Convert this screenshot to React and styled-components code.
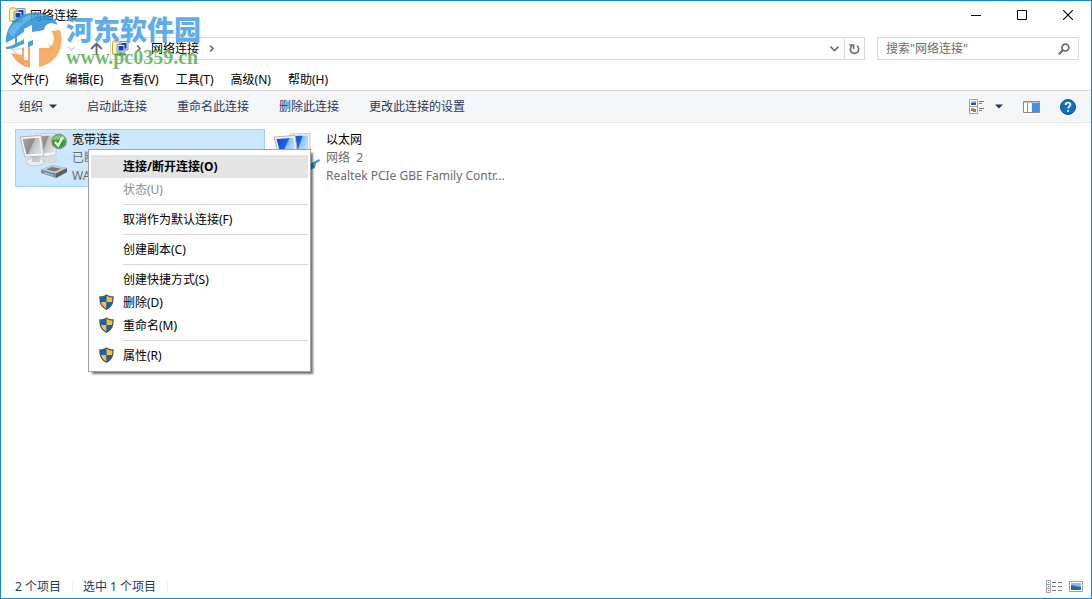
import React from "react";
import styled, { createGlobalStyle, css } from "styled-components";

const Global = createGlobalStyle`
  * { box-sizing: border-box; }
  body {
    margin: 0;
    background: #fff;
    color: #000;
    font-family: "Noto Sans", "Noto Sans CJK SC", sans-serif;
    font-size: 12px;
    line-height: 18px;
  }
  button, input { font: inherit; color: inherit; }
`;

const plainButton = css`
  display: flex;
  align-items: center;
  border: 0;
  padding: 0;
  background: none;
  white-space: nowrap;
`;

const Window = styled.div`
  position: relative;
  display: flex;
  flex-direction: column;
  min-height: 100vh;
  border: 1px solid #1883d7;
  background: #fff;
`;

const TitleBar = styled.header`
  display: flex;
  align-items: center;
  justify-content: space-between;
  height: 28px;
  padding-left: 8px;
`;

const Title = styled.h1`
  display: flex;
  align-items: center;
  gap: 4px;
  margin: 0;
  padding-top: 1px;
  font-size: 12px;
  font-weight: 400;
`;

const WindowControls = styled.div`
  display: flex;
`;

const ControlButton = styled.button`
  ${plainButton}
  justify-content: center;
  width: 46px;
  height: 28px;
`;

const AddressRow = styled.div`
  display: flex;
  align-items: center;
  gap: 12px;
  height: 39px;
  padding: 0 12px 0 10px;
`;

const AddressGroup = styled.div`
  display: flex;
  flex: 1;
  align-items: center;
`;

const NavButtons = styled.div`
  display: flex;
  align-items: center;
  justify-content: space-between;
  width: 92px;
  margin-right: 7px;
`;

const NavButton = styled.button`
  ${plainButton}
`;

const AddressBox = styled.nav`
  display: flex;
  flex: 1;
  align-items: center;
  height: 23px;
  border: 1px solid #d9d9d9;
  padding-left: 1px;
`;

const Crumbs = styled.div`
  display: flex;
  align-items: center;
  gap: 8px;
  padding-left: 5px;
`;

const CrumbButton = styled.button`
  ${plainButton}
`;

const Crumb = styled.a`
  color: #000;
  text-decoration: none;
`;

const BoxEnd = styled.div`
  display: flex;
  margin-left: auto;
`;

const BoxButton = styled.button`
  ${plainButton}
  justify-content: center;
  width: 20px;
  height: 21px;
  border-left: 1px solid ${(p) => (p.$divided ? "#d9d9d9" : "transparent")};
`;

const SearchBox = styled.label`
  display: flex;
  align-items: center;
  width: 202px;
  height: 23px;
  border: 1px solid #d9d9d9;
  padding: 0 8px;
`;

const SearchInput = styled.input`
  flex: 1;
  min-width: 0;
  border: 0;
  padding: 0;
  outline: 0;
  background: none;
  &::placeholder { color: #6d6d6d; opacity: 1; }
`;

const MenuBar = styled.nav`
  display: flex;
  align-items: center;
  gap: 17px;
  height: 22px;
  padding: 2px 10px 0;
`;

const MenuBarButton = styled.button`
  ${plainButton}
`;

const Toolbar = styled.div`
  display: flex;
  align-items: center;
  justify-content: space-between;
  height: 33px;
  padding: 0 15px 0 18px;
  border-top: 1px solid #dadbdc;
  border-bottom: 1px solid #e5e7ea;
  background: #f5f6f7;
  color: #1e395b;
`;

const ToolGroup = styled.div`
  display: flex;
  align-items: center;
  gap: ${(p) => p.$gap}px;
`;

const ToolButton = styled.button`
  ${plainButton}
  gap: 6px;
`;

const Content = styled.main`
  display: flex;
  flex: 1;
  align-items: flex-start;
  gap: 4px;
  padding: 6px 14px;
`;

const TileSlot = styled.div`
  position: relative;
  width: 250px;
`;

const Tile = styled.button`
  ${plainButton}
  align-items: flex-start;
  gap: 4px;
  width: 100%;
  height: 58px;
  padding: 1px 3px;
  border: 1px solid ${(p) => (p.$selected ? "#99d1ff" : "transparent")};
  background: ${(p) => (p.$selected ? "#cce8ff" : "none")};
  text-align: left;
`;

const TileText = styled.span`
  display: flex;
  flex-direction: column;
  color: #6d6d6d;
`;

const TileName = styled.span`
  color: #000;
`;

const ContextMenu = styled.div`
  position: absolute;
  z-index: 2;
  top: 20px;
  left: 73px;
  width: 223px;
  padding: 5px 2px 4px;
  border: 1px solid #a0a0a0;
  background: #fff;
  box-shadow: 3px 3px 2px -1px rgba(0, 0, 0, 0.55);
`;

const MenuItem = styled.button`
  ${plainButton}
  width: 100%;
  height: 23px;
  background: ${(p) => (p.$active ? "#e4e4e4" : "none")};
  font-weight: ${(p) => (p.$active ? 700 : 400)};
  color: ${(p) => (p.disabled ? "#8d8d8d" : "#000")};
`;

const MenuIcon = styled.span`
  display: flex;
  width: 32px;
  padding: 0 0 2px 8px;
`;

const Separator = styled.hr`
  height: 1px;
  margin: 3px 0 3px 32px;
  border: 0;
  background: #d7d7d7;
`;

const StatusBar = styled.footer`
  display: flex;
  align-items: center;
  justify-content: space-between;
  height: 24px;
  padding: 1px 8px 0 14px;
  color: #1e395b;
`;

const StatusText = styled.span`
  padding-right: 11px;
  border-right: 1px solid #f0f0f0;
  line-height: 12px;
`;

const Watermark = styled.div`
  position: absolute;
  z-index: 1;
  top: 9px;
  left: 4px;
  display: flex;
  gap: 3px;
  opacity: 0.85;
  pointer-events: none;
`;

const WatermarkText = styled.div`
  display: flex;
  flex-direction: column;
`;

const WatermarkName = styled.span`
  color: #469fe8;
  font-size: 27px;
  font-weight: 900;
  line-height: 39px;
`;

const WatermarkUrl = styled.span`
  color: #5ab157;
  font-family: "Liberation Serif", serif;
  font-size: 20px;
  font-weight: 700;
  line-height: 16px;
`;

const NetworkFolder = () => (
  <svg width="17" height="17" viewBox="0 0 17 17" aria-hidden="true">
    <path d="M0.5 2.5V14H12V2H7L6 0.8H1.5Z" fill="#f7e593" stroke="#c8ac4c" />
    <path d="M1 13.5V3H5V13.5Z" fill="#fff3b3" />
    <path d="M8 1.5H16V10H8Z" fill="#dfe6ef" stroke="#8c96a5" />
    <path d="M5 4.5H13V12H5Z" fill="#e7edf5" stroke="#8290a3" />
    <path d="M6.5 6H11.5V10.5H6.5ZM9.5 3H14.5V8.5H12.5V4.8H9.5Z" fill="#1738c8" />
    <path d="M3 14.5H14M8.5 12.5V16" stroke="#24a36b" strokeWidth="2" />
  </svg>
);

const Chevron = ({ down = false, color = "#6b6b6b", size = 9 }) => (
  <svg width={size} height={size} viewBox="0 0 9 9" fill="none" stroke={color} strokeWidth="1.6" aria-hidden="true">
    <path d={down ? "M0.5 2.5L4.5 6.5L8.5 2.5" : "M3 1.5L6 4.5L3 7.5"} />
  </svg>
);

const Arrow = ({ flip = false, color }) => (
  <svg width="14" height="14" viewBox="0 0 14 14" fill="none" stroke={color} strokeWidth="1.6" aria-hidden="true">
    <path d={flip ? "M1 7H13M8 2L13 7L8 12" : "M13 7H1M6 2L1 7L6 12"} />
  </svg>
);

const UpArrow = () => (
  <svg width="13" height="14" viewBox="0 0 13 14" fill="none" stroke="#646464" strokeWidth="1.8" aria-hidden="true">
    <path d="M6.5 13V2M1.2 7L6.5 1.6L11.8 7" />
  </svg>
);

const Caret = () => (
  <svg width="8" height="5" viewBox="0 0 8 5" aria-hidden="true">
    <path d="M0 0.5H8L4 4.5Z" fill="#1e395b" />
  </svg>
);

const Shield = () => (
  <svg width="15" height="16" viewBox="0 0 15 16" aria-hidden="true">
    <path d="M7.5 0.2C9.4 1.8 11.9 2.5 14.7 2.3C14.8 8.8 13.4 13.3 7.5 15.9C1.6 13.3 0.2 8.8 0.3 2.3C3.1 2.5 5.6 1.8 7.5 0.2Z" fill="#4b545c" />
    <path d="M7.4 1.7C5.6 3 3.7 3.5 1.6 3.5C1.6 5.2 1.7 6.5 2 8H7.4Z" fill="#0b62c8" />
    <path d="M7.6 1.7C9.4 3 11.3 3.5 13.4 3.5C13.4 5.2 13.3 6.5 13 8H7.6Z" fill="#fdbf2d" />
    <path d="M2 8H7.4V14.5C4.6 13.1 2.7 11 2 8Z" fill="#fdbf2d" />
    <path d="M13 8H7.6V14.5C10.4 13.1 12.3 11 13 8Z" fill="#0b62c8" />
  </svg>
);

const Computers = ({ online = false }) => {
  const screen = online ? "url(#screenOn)" : "url(#screenOff)";
  return (
    <svg width="49" height="50" viewBox="0 0 49 50" aria-hidden="true">
      <defs>
        <linearGradient id={online ? "screenOn" : "screenOff"} x1="0" y1="0" x2="1" y2="0.4">
          <stop offset="0" stopColor={online ? "#1d49dc" : "#a8a8a8"} />
          <stop offset="0.55" stopColor={online ? "#1c5cec" : "#8d8d8d"} />
          <stop offset="0.62" stopColor={online ? "#8fc0ff" : "#c0c0c0"} />
          <stop offset="1" stopColor={online ? "#bcdcff" : "#dadada"} />
        </linearGradient>
      </defs>
      <ellipse cx="31" cy="29" rx="8" ry="3.5" fill="#d8dadc" />
      <path d="M17 3L37 2.5L37 24L25 26L18 22Z" fill="#f3f4f5" stroke="#c4c6c8" />
      <path d="M19 5L35 4.5L35 21.5L21 22Z" fill={screen} />
      <ellipse cx="16" cy="31" rx="9" ry="4" fill="#eceef0" stroke="#c3c7ca" />
      <path d="M13 25H20L21 31H13Z" fill="#c4c7ca" />
      <path d="M1 6L22 4.5L25 25L6 26Z" fill="#f6f7f8" stroke="#b4b7ba" />
      <path d="M3.5 8L20.3 6.8L22.8 22.5L7.5 23.5Z" fill={screen} />
      {online ? (
        <path d="M32 36L37 33L46 28L47 30L43 32L42 37L39 38L34 40Z" fill="#2f9ac5" />
      ) : (
        <>
          <path d="M22 38.5L33 34L48 37V41L37 47L22 42Z" fill="#85898d" />
          <path d="M22 38.5L33 34L48 37L37 42.5Z" fill="#c7cbce" />
          <path d="M27 38.5L33 36L42 37.7L36 40.5Z" fill="#74797e" />
          <path d="M25 41L34 43.8V45L25 42.3Z" fill="#7cd3ff" />
          <path d="M37 42.5L48 37V41L37 47Z" fill="#5d6165" />
          <circle cx="40" cy="10.5" r="7.2" fill="#2fa431" stroke="#8d9692" strokeWidth="1.4" />
          <path d="M33.8 9.5A6.3 6.3 0 0 1 46.2 9.5Q40 7.5 33.8 9.5Z" fill="#7cc873" />
          <path d="M36 11L39.2 14.5L43.8 6" fill="none" stroke="#fff" strokeWidth="2.2" />
        </>
      )}
    </svg>
  );
};

const SiteLogo = () => (
  <svg width="58" height="60" viewBox="0 0 58 60" aria-hidden="true">
    <path d="M1 33C0 19 9 5 26 3C38 2 48 6 53 15C45 11 40 14 39 20L27 22V15L19 19V34L10 36V28Z" fill="#288fd6" />
    <path d="M3 22C10 9 25 1 42 6C29 5 15 13 8 27Z" fill="#4aa9e5" />
    <path d="M55 20C61 38 50 54 34 57V38H43C49 36 51 27 46 21Z" fill="#f6a04d" />
    <path d="M6 43C10 51 16 56 25 58V35L17 38V45Z" fill="#f39a49" />
    <path d="M12 27L23 19V50H19V30L12 34ZM28 25L39 20V32L33 34V55H28Z" fill="#fff" />
    <path d="M35 22H43C48 23 48 33 42 34H35V30H41Q43 28 41 26H35Z" fill="#fff" />
    <path d="M1 37C8 36 14 32 19 29V33C13 37 7 39 1 39ZM23 32L28 30V35L23 37Z" fill="#288fd6" />
  </svg>
);

const menuNames = ["文件(F)", "编辑(E)", "查看(V)", "工具(T)", "高级(N)", "帮助(H)"];
const commands = ["启动此连接", "重命名此连接", "删除此连接", "更改此连接的设置"];

const contextItems = [
  { label: "连接/断开连接(O)", active: true },
  { label: "状态(U)", disabled: true },
  null,
  { label: "取消作为默认连接(F)" },
  null,
  { label: "创建副本(C)" },
  null,
  { label: "创建快捷方式(S)" },
  { label: "删除(D)", shield: true },
  { label: "重命名(M)", shield: true },
  null,
  { label: "属性(R)", shield: true },
];

const Connection = ({ name, status, device, online, selected, children }) => (
  <TileSlot>
    <Tile $selected={selected}>
      <Computers online={online} />
      <TileText>
        <TileName>{name}</TileName>
        <span>{status}</span>
        <span>{device}</span>
      </TileText>
    </Tile>
    {children}
  </TileSlot>
);

export default function App() {
  return (
    <Window>
      <Global />
      <TitleBar>
        <Title>
          <NetworkFolder />
          网络连接
        </Title>
        <WindowControls>
          <ControlButton aria-label="最小化">
            <svg width="10" height="10"><path d="M0 5.5H10" stroke="#000" /></svg>
          </ControlButton>
          <ControlButton aria-label="最大化">
            <svg width="10" height="10"><path d="M0.5 0.5H9.5V9.5H0.5Z" fill="none" stroke="#000" /></svg>
          </ControlButton>
          <ControlButton aria-label="关闭">
            <svg width="10" height="10"><path d="M0 0L10 10M10 0L0 10" stroke="#000" strokeWidth="1.1" /></svg>
          </ControlButton>
        </WindowControls>
      </TitleBar>

      <AddressRow>
        <AddressGroup>
          <NavButtons>
            <NavButton aria-label="后退"><Arrow color="#dcdcdc" /></NavButton>
            <NavButton aria-label="前进"><Arrow flip color="#dcdcdc" /></NavButton>
            <NavButton aria-label="最近的位置"><Chevron down color="#d0d0d0" size={7} /></NavButton>
            <NavButton aria-label="向上"><UpArrow /></NavButton>
          </NavButtons>
          <AddressBox aria-label="地址">
            <NetworkFolder />
            <Crumbs>
              <CrumbButton aria-label="位置"><Chevron /></CrumbButton>
              <Crumb href="#connections">网络连接</Crumb>
              <Chevron />
            </Crumbs>
            <BoxEnd>
              <BoxButton aria-label="历史记录"><Chevron down /></BoxButton>
              <BoxButton $divided aria-label="刷新">
                <svg width="11" height="12" viewBox="0 0 11 12" fill="none" stroke="#6b6b6b" strokeWidth="1.6">
                  <path d="M8 2.8A4.2 4.2 0 1 1 3 2.8M4.6 6V2H0.5" />
                </svg>
              </BoxButton>
            </BoxEnd>
          </AddressBox>
        </AddressGroup>
        <SearchBox>
          <SearchInput type="text" aria-label="搜索" placeholder={'搜索"网络连接"'} />
          <svg width="12" height="12" viewBox="0 0 12 12" fill="none" stroke="#6b6b6b" strokeWidth="1.7" aria-hidden="true">
            <circle cx="7.4" cy="4.5" r="3.4" />
            <path d="M5 7L0.8 11.2" strokeWidth="2" />
          </svg>
        </SearchBox>
      </AddressRow>

      <MenuBar>
        {menuNames.map((name) => (
          <MenuBarButton key={name}>{name}</MenuBarButton>
        ))}
      </MenuBar>

      <Toolbar>
        <ToolGroup $gap={30}>
          <ToolButton>组织<Caret /></ToolButton>
          {commands.map((name) => (
            <ToolButton key={name}>{name}</ToolButton>
          ))}
        </ToolGroup>
        <ToolGroup $gap={20}>
          <ToolGroup $gap={10}>
            <ToolButton aria-label="更改视图">
              <svg width="16" height="15" viewBox="0 0 16 15">
                <path d="M0.5 0.5H8.5V14.5H0.5ZM0.5 7.5H8.5" fill="#fff" stroke="#a0a0a0" />
                <path d="M2 2H7V6H2Z" fill="#9fd0f2" />
                <path d="M2 4L7 3.5V6H2Z" fill="#24569c" />
                <path d="M2 9H5V11H2Z" fill="#e28a2e" />
                <path d="M4 10H7V13H4Z" fill="#4fa34e" />
                <path d="M2 11H4V12H2Z" fill="#d5403b" />
                <path d="M10 2.5H15M10 4.5H13M10 9.5H15M10 11.5H13" stroke="#777" />
              </svg>
            </ToolButton>
            <ToolButton aria-label="更多选项"><Caret /></ToolButton>
          </ToolGroup>
          <ToolButton aria-label="显示预览窗格">
            <svg width="17" height="12" viewBox="0 0 17 12">
              <path d="M0.5 0.5H16.5V11.5H0.5Z" fill="#fff" stroke="#8b8b8b" />
              <path d="M0 1H17M4.5 2V11" stroke="#8b8b8b" />
              <path d="M9 2H16V11H9Z" fill="#3d94e0" />
            </svg>
          </ToolButton>
          <ToolButton aria-label="帮助">
            <svg width="16" height="16" viewBox="0 0 16 16">
              <circle cx="8" cy="8" r="7.5" fill="#0b6fcb" stroke="#084f97" />
              <path d="M5.6 6C5.6 2.8 10.6 2.9 10.4 5.8C10.3 7.4 8.1 7.6 8.1 9.6" fill="none" stroke="#fff" strokeWidth="1.8" />
              <circle cx="8.1" cy="12" r="1.1" fill="#fff" />
            </svg>
          </ToolButton>
        </ToolGroup>
      </Toolbar>

      <Content>
        <Connection selected name="宽带连接" status="已断开连接" device="WAN Miniport (PPPOE)">
          <ContextMenu role="menu">
            {contextItems.map((item, i) =>
              item ? (
                <MenuItem key={item.label} role="menuitem" $active={item.active} disabled={item.disabled}>
                  <MenuIcon>{item.shield && <Shield />}</MenuIcon>
                  {item.label}
                </MenuItem>
              ) : (
                <Separator key={i} />
              )
            )}
          </ContextMenu>
        </Connection>
        <Connection online name="以太网" status="网络&nbsp; 2" device="Realtek PCIe GBE Family Contr..." />
      </Content>

      <StatusBar>
        <ToolGroup $gap={10}>
          <StatusText>2 个项目</StatusText>
          <StatusText>选中 1 个项目</StatusText>
        </ToolGroup>
        <ToolGroup $gap={7}>
          <ToolButton aria-label="详细信息">
            <svg width="16" height="13" viewBox="0 0 16 13">
              <path d="M0.5 0.5H4.5V12.5H0.5ZM0.5 4.5H4.5M0.5 8.5H4.5" fill="#fff" stroke="#a5a5a5" />
              <path d="M2 2H3V3H2ZM2 6H3V7H2Z" fill="#337ab7" />
              <path d="M2 10H3V11H2Z" fill="#c33" />
              <path d="M6 2.5H10M12 2.5H16M6 6.5H10M12 6.5H16M6 10.5H10M12 10.5H16" stroke="#777" />
            </svg>
          </ToolButton>
          <ToolButton aria-label="大图标">
            <svg width="14" height="11" viewBox="0 0 14 11">
              <path d="M0.5 0.5H13.5V10.5H0.5Z" fill="#fff" stroke="#a0a0a0" />
              <path d="M2 2H12V9H2Z" fill="#86bdf0" />
              <path d="M2 4L6 5L12 6V9H2Z" fill="#2c6e86" />
              <path d="M2 7L12 6.5V9H2Z" fill="#2766b5" />
            </svg>
          </ToolButton>
        </ToolGroup>
      </StatusBar>

      <Watermark aria-hidden="true">
        <SiteLogo />
        <WatermarkText>
          <WatermarkName>河东软件园</WatermarkName>
          <WatermarkUrl>www.pc0359.cn</WatermarkUrl>
        </WatermarkText>
      </Watermark>
    </Window>
  );
}
